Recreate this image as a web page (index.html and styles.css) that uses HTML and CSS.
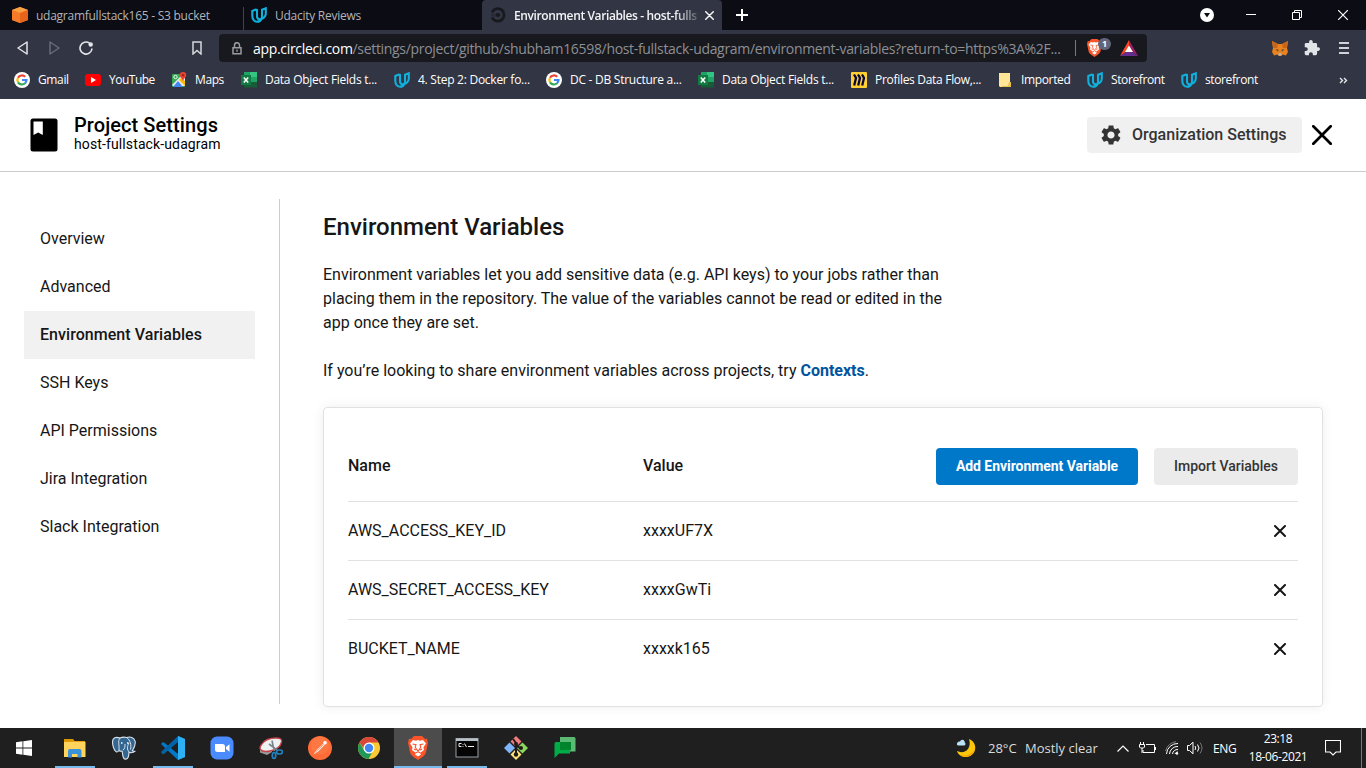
FILE: index.html
```html
<!DOCTYPE html>
<html lang="en">
<head>
<meta charset="utf-8">
<title>Environment Variables - host-fullstack-udagram</title>
<link rel="stylesheet" href="styles.css">
</head>
<body>
<svg class="defs" width="0" height="0">
  <symbol id="udacity" viewBox="0 0 16 16"><g fill="none" stroke="#11b0dc" stroke-width="2.1"><path d="M5.600 2.200 1.300 4v4.700c0 3.600 2.200 6.100 4.900 6.100 1.300 0 2.300-.5 3.100-1.300"/><path d="M6 2v7.600c0 1.800 1.200 2.600 2.700 2.600 3.500 0 6.100-2.400 6.100-5.700V1.300L11 2.800v6.700c0 2.600-1.600 4.800-4.500 5.100"/></g></symbol>
  <symbol id="google" viewBox="0 0 16 16"><circle cx="8" cy="8" r="8" fill="#fff"/><g fill="none" stroke-width="2.200"><path d="M11.200 4.800A4.600 4.600 0 0 0 4 5.700" stroke="#ea4335"/><path d="M4 5.700a4.600 4.600 0 0 0 0 4.600" stroke="#fbbc05"/><path d="M4 10.300a4.600 4.600 0 0 0 7 1" stroke="#34a853"/><path d="M11 11.300A4.400 4.400 0 0 0 12.500 8H8" stroke="#4285f4"/></g></symbol>
  <symbol id="excel" viewBox="0 0 16 16"><path d="M3 0h6v5H3z" fill="#21a366"/><path d="M9 0h7v5H9z" fill="#33c481"/><path d="M3 5h6v5H3z" fill="#107c41"/><path d="M9 5h7v5H9z" fill="#21a366"/><path d="M3 10h13v5.500H3z" fill="#185c37"/><path d="M0 3h10v10H0z" fill="#107c41"/><path d="m2.800 5.500 4.400 5M7.200 5.500l-4.400 5" stroke="#fff" stroke-width="1.600"/></symbol>
  <symbol id="cross" viewBox="0 0 12 12"><path d="m1 1 10 10M11 1 1 11" fill="none" stroke="currentColor" stroke-width="2" stroke-linecap="round"/></symbol>
  <symbol id="brave" viewBox="0 0 20 24"><path d="M6 0h8l3 3 2-.3 1 4-2 9.300c-.6 3-2.500 4.500-8 8-5.500-3.500-7.400-5-8-8L0 6.700l1-4L3 3z" fill="#fb542b"/><path d="m5 4 3 .7L10 4l2 .7L15 4l3 3.500-2.500 3.700.5 2.800-4 3 1 1.500-3 2-3-2L8 17l-4-3 .5-2.800L2 7.500z" fill="#fff"/><path d="m4.500 8 3.500.6-.8 2.400 1.600 2.700L10 15l1.200-1.300 1.600-2.700L12 8.600l3.500-.6M7.500 17l2.500-1.200L12.500 17M6 13l2 1M14 13l-2 1" fill="none" stroke="#fb542b" stroke-width="1.100"/></symbol>
</svg>

<div class="browser">
  <div class="tabs">
    <div class="tab">
      <svg class="fav" viewBox="0 0 16 16"><path d="M8 0 16 3v10l-8 3-8-3V3z" fill="#f58536"/><path d="m8 0 8 3-8 3-8-3z" fill="#f9a143"/><path d="M8 6 0 3v10l8 3z" fill="#f47b28"/><path d="m8 6 8-3v10l-8 3z" fill="#e8641b"/></svg>
      <span class="tab-title">udagramfullstack165 - S3 bucket</span>
    </div>
    <div class="tab tab-second">
      <svg class="fav"><use href="#udacity"/></svg>
      <span class="tab-title">Udacity Reviews</span>
    </div>
    <div class="tab active">
      <svg class="fav" viewBox="0 0 16 16"><path d="M1.500 5.200A7 7 0 1 1 1.500 10.800" fill="none" stroke="#17191d" stroke-width="3" transform="translate(.7 .7) scale(.9)"/><circle cx="8" cy="8" r="2.100" fill="#17191d"/><path d="M1 6.500h6v3H1z" fill="#17191d" opacity=".35"/></svg>
      <span class="tab-title">Environment Variables - host-fulls</span>
      <svg class="tab-close"><use href="#cross"/></svg>
    </div>
    <svg class="new-tab" viewBox="0 0 12 12"><path d="M6 0v12M0 6h12" stroke="#fff" stroke-width="2"/></svg>
    <div class="window-buttons">
      <svg width="14" height="14" viewBox="0 0 14 14"><circle cx="7" cy="7" r="7" fill="#fff"/><path d="M4 5h6L7 9.500z" fill="#0b0c14"/></svg>
      <svg width="10" height="10" viewBox="0 0 10 10"><path d="M0 4.500h10" stroke="#fff"/></svg>
      <svg width="10" height="10" viewBox="0 0 10 10"><path d="M.5 2.500h7v7h-7zM2.500 2.500v-2h7v7h-2" fill="none" stroke="#fff"/></svg>
      <svg width="10" height="10" viewBox="0 0 10 10"><path d="m0 0 10 10M10 0 0 10" stroke="#fff" stroke-width="1.200"/></svg>
    </div>
  </div>

  <div class="toolbar">
    <div class="nav">
      <svg width="11" height="14" viewBox="0 0 11 14"><path d="M10 1v12L1 7z" fill="none" stroke="#e4e5ea" stroke-width="1.500" stroke-linejoin="round"/></svg>
      <svg width="11" height="14" viewBox="0 0 11 14"><path d="M1 1v12l9-6z" fill="none" stroke="#686b78" stroke-width="1.500" stroke-linejoin="round"/></svg>
      <svg width="14" height="14" viewBox="0 0 14 14"><path d="M10.500 2.200A6 6 0 1 0 13 7.500" fill="none" stroke="#e4e5ea" stroke-width="1.600"/><circle cx="11.700" cy="3.500" r="2.200" fill="#e4e5ea"/></svg>
      <svg class="save" width="10" height="14" viewBox="0 0 10 14"><path d="M1 1h8v12l-4-3.500L1 13z" fill="none" stroke="#d6d7dc" stroke-width="1.500"/></svg>
    </div>
    <div class="address">
      <svg width="10" height="13" viewBox="0 0 10 13"><path d="M2.500 5.500V3.200a2.500 2.500 0 0 1 5 0v2.300" fill="none" stroke="#9a9ca4" stroke-width="1.500"/><path d="M1 5.700h8v6H1z" fill="none" stroke="#9a9ca4" stroke-width="1.500"/><path d="M4.300 7.500h1.400v2.300H4.300z" fill="#9a9ca4"/></svg>
      <span class="url"><b>app.circleci.com</b>/settings/project/github/shubham16598/host-fullstack-udagram/environment-variables?return-to=https%3A%2F...</span>
      <span class="url-split"></span>
      <span class="shield"><svg width="15" height="18"><use href="#brave"/></svg><i>1</i></span>
      <svg class="bat" width="18" height="16" viewBox="0 0 18 16"><path d="M9 0 0 16l9-6z" fill="#ff4724"/><path d="m9 0 9 16-9-6z" fill="#9e1f63"/><path d="m0 16 9-6 9 6z" fill="#662d91"/><path d="m9 5.500 4 6.500H5z" fill="#fff"/></svg>
    </div>
    <div class="extensions">
      <svg width="16" height="15" viewBox="0 0 16 15"><path d="m0 0 6 3h4l6-3-1 7 1 4-2 3.500-3.500-1L9 15H7l-1.500-1.500-3.500 1L0 11l1-4z" fill="#e8821e"/><path d="m0 0 6 3-1 4-4 0zM16 0l-6 3 1 4 4 0z" fill="#c9651b"/><path d="m3.500 8 3 1-.5 1.500zM12.500 8l-3 1 .5 1.500z" fill="#333a4a"/><path d="M6.500 12h3l.3 2.500H6.200z" fill="#c0ad9e"/></svg>
      <svg width="16" height="16" viewBox="1 1 22 22"><path d="M20.500 11H19V7a2 2 0 0 0-2-2h-4V3.500a2.500 2.500 0 0 0-5 0V5H4a2 2 0 0 0-2 2v3.800h1.500a2.700 2.700 0 0 1 0 5.400H2V20c0 1.100.9 2 2 2h3.800v-1.500a2.700 2.700 0 0 1 5.400 0V22H17a2 2 0 0 0 2-2v-4h1.500a2.500 2.500 0 0 0 0-5z" fill="#e3e4e8"/></svg>
      <svg width="10" height="12" viewBox="0 0 10 12"><path d="M0 1h10M0 6h10M0 11h10" stroke="#d2d3d9" stroke-width="1.800"/></svg>
    </div>
  </div>

  <div class="bookmarks">
    <div class="bm bm1"><svg><use href="#google"/></svg><span>Gmail</span></div>
    <div class="bm bm2"><svg viewBox="0 0 16 16"><rect y="2" width="16" height="12" rx="3" fill="#f00"/><path d="M6 5v6l5-3z" fill="#fff"/></svg><span>YouTube</span></div>
    <div class="bm bm3"><svg viewBox="0 0 16 16"><rect x="1" y="2" width="13" height="13" rx="1" fill="#34a853"/><path d="m1 13 8-8 5 1v8H2z" fill="#e8eaed"/><path d="m2 15 5-6 5 6z" fill="#4285f4"/><path d="m8 8 6 6V9l-4-3z" fill="#fbbc04"/><circle cx="4.500" cy="5" r="1.700" fill="none" stroke="#fff" stroke-width=".9"/><path d="M12 0a3.300 3.300 0 0 1 3.300 3.300C15.300 5.500 12 6.500 12 10c0-3.500-3.300-4.500-3.300-6.700A3.300 3.300 0 0 1 12 0z" fill="#ea4335"/><circle cx="12" cy="3.200" r="1.200" fill="#9d241b"/></svg><span>Maps</span></div>
    <div class="bm bm4"><svg><use href="#excel"/></svg><span>Data Object Fields t...</span></div>
    <div class="bm bm5"><svg><use href="#udacity"/></svg><span>4. Step 2: Docker fo...</span></div>
    <div class="bm bm6"><svg><use href="#google"/></svg><span>DC - DB Structure a...</span></div>
    <div class="bm bm7"><svg><use href="#excel"/></svg><span>Data Object Fields t...</span></div>
    <div class="bm bm8"><svg viewBox="0 0 16 16"><rect width="16" height="16" rx="1" fill="#ffd02f"/><path d="m3 2.500 2 3.500-1.800 7.500M7 2.500l2 3.500-1.800 7.500M11 2.500l2 3.500-1.800 7.500" fill="none" stroke="#07063f" stroke-width="2.300"/></svg><span>Profiles Data Flow,...</span></div>
    <div class="bm bm9"><svg viewBox="0 0 16 16"><path d="M2 1h11v10h1v4H3l-1-1z" fill="#ffe595"/><path d="M12 10h2v5H5v-1h6z" fill="#e9bf4e"/></svg><span>Imported</span></div>
    <div class="bm bm10"><svg><use href="#udacity"/></svg><span>Storefront</span></div>
    <div class="bm bm11"><svg><use href="#udacity"/></svg><span>storefront</span></div>
    <svg class="more" viewBox="0 0 9 6"><path d="m1 .5 2.500 2.500L1 5.500M5 .5 7.500 3 5 5.500" fill="none" stroke="#e6e7eb" stroke-width="1.400"/></svg>
  </div>
</div>

<header class="header">
  <svg class="book" viewBox="0 0 28 34"><rect x=".5" y=".5" width="27" height="33" rx="2.500"/><path d="M3.500 3.500h9.300V17l-4.600-2.500L3.500 17z" fill="#fff"/></svg>
  <div class="project">
    <div class="project-title">Project Settings</div>
    <div class="project-name">host-fullstack-udagram</div>
  </div>
  <button class="org"><svg width="24" height="24" viewBox="0 0 24 24"><path fill="#343434" d="M19.140 12.940c.04-.3.060-.61.060-.94 0-.32-.02-.64-.07-.94l2.030-1.580c.18-.14.23-.41.120-.61l-1.920-3.320c-.12-.22-.37-.29-.59-.22l-2.390.96c-.5-.38-1.030-.7-1.620-.94l-.36-2.540c-.04-.24-.24-.41-.48-.41h-3.840c-.24 0-.43.17-.47.41l-.36 2.540c-.59.24-1.130.57-1.620.94l-2.390-.96c-.22-.08-.47 0-.59.220L2.740 8.870c-.12.21-.08.470.12.610l2.030 1.580c-.05.3-.09.630-.09.940s.02.640.07.940l-2.030 1.580c-.18.140-.23.410-.12.610l1.920 3.320c.12.220.37.290.59.220l2.390-.96c.5.380 1.030.7 1.620.94l.36 2.540c.05.24.24.410.48.410h3.840c.24 0 .44-.17.47-.41l.36-2.540c.59-.24 1.130-.56 1.620-.94l2.390.96c.22.080.47 0 .59-.22l1.920-3.320c.12-.22.070-.47-.12-.61l-2.010-1.580zM12 15.600c-1.980 0-3.600-1.620-3.600-3.600s1.620-3.600 3.600-3.600 3.600 1.620 3.600 3.600-1.620 3.600-3.600 3.600z"/></svg><span>Organization Settings</span></button>
  <svg class="close" viewBox="0 0 20 20"><path d="m1.300 1.300 17.400 17.400M18.700 1.300 1.300 18.700" stroke="#000" stroke-width="2.700" stroke-linecap="round"/></svg>
</header>

<div class="body">
  <nav class="sidebar">
    <a>Overview</a>
    <a>Advanced</a>
    <a class="current">Environment Variables</a>
    <a>SSH Keys</a>
    <a>API Permissions</a>
    <a>Jira Integration</a>
    <a>Slack Integration</a>
  </nav>
  <main class="main">
    <h1>Environment Variables</h1>
    <p>Environment variables let you add sensitive data (e.g. API keys) to your jobs rather than<br>placing them in the repository. The value of the variables cannot be read or edited in the<br>app once they are set.</p>
    <p>If you’re looking to share environment variables across projects, try <a class="link">Contexts</a>.</p>
    <section class="card">
      <div class="row head"><span>Name</span><span>Value</span><div class="actions"><button class="btn primary">Add Environment Variable</button><button class="btn">Import Variables</button></div></div>
      <div class="row"><span>AWS_ACCESS_KEY_ID</span><span>xxxxUF7X</span><svg class="remove"><use href="#cross"/></svg></div>
      <div class="row"><span>AWS_SECRET_ACCESS_KEY</span><span>xxxxGwTi</span><svg class="remove"><use href="#cross"/></svg></div>
      <div class="row"><span>BUCKET_NAME</span><span>xxxxk165</span><svg class="remove"><use href="#cross"/></svg></div>
    </section>
  </main>
</div>

<footer class="taskbar">
  <div class="start"><svg width="16" height="16" viewBox="0 0 16 16"><path d="m0 2.200 6.500-.9v6.200H0zM7.300 1.200 16 0v7.500H7.300zM0 8.400h6.500v6.300L0 13.800zM7.300 8.400H16V16l-8.700-1.200z" fill="#fff"/></svg></div>
  <div class="apps">
    <div class="app open"><svg viewBox="0 0 24 24"><path d="M1 3h9l1.500 2H22v16H1z" fill="#e8a30c"/><path d="M1 6h21.500v15H1z" fill="#ffd35c"/><path d="M1 3h9v2.500H1z" fill="#dd9500"/><path d="M5 21.500V15q0-2 2-2h9.500q2 0 2 2v6.500h-4V18h-5.500v3.500z" fill="#3a92d8"/></svg></div>
    <div class="app"><svg viewBox="0 0 24 24"><path d="M8 2C4 .5.500 1.500.5 6c0 4 2 9.500 4 10 1 .3 2-.8 2.600-1.500.8.7 2 .9 3 .6.600 2.500.2 7.500 3 8 3 .3 3.600-2.500 3.900-6.700 2 .5 4.500.3 5.800-1-1-.2-1.800-.3-2.500-.6 2-3 3.400-7.600 2.700-10C22 1.500 18.500.200 14.500 1.500 12 .8 10 1 8 2z" fill="#336791" stroke="#d9e2ea" stroke-width="1.100"/><path d="M8 2C5.500 5 7.500 9 7 14M14.500 1.500c4 2.500 5 8 4 12M11 14c2-1 2-4 2-6M17 16c-2-2-2-6 0-9" fill="none" stroke="#d9e2ea" stroke-width="1"/><path d="M9 7h1.500M15 7h1.500" stroke="#fff" stroke-width="1.400"/></svg></div>
    <div class="app open"><svg viewBox="0 0 24 24"><path d="M17 0 24 3v18l-7 3L1.500 9.500 0 8l2-2 2 1.200L17 18z" fill="#0078c8"/><path d="m0 16 17-16v6L4 17l-2 1.500z" fill="#0065a9"/><path d="M17 0 24 3v18l-7 3z" fill="#2eb0f5"/></svg></div>
    <div class="app"><svg viewBox="0 0 24 24"><rect x=".5" y=".5" width="23" height="23" rx="6.500" fill="#4a8cff"/><path d="M5 8h7.500Q15 8 15 10.500V16H7.500Q5 16 5 13.500zM16 11l3.500-2.700v7.400L16 13z" fill="#fff"/></svg></div>
    <div class="app"><svg viewBox="0 0 24 24"><path d="m1 14 0 2.500 7 2.500 5-3v-3z" fill="#9a9a9a"/><path d="M3 8q4-6 14-6 6.500 0 5.500 4-1.500 7-11.500 9-7 1.500-9.500-1.500Q0 11.500 3 8z" fill="#eef1f2" stroke="#c4434a" stroke-width="1.300"/><path d="M13 4.500q1 6 2.500 10.500M10 8l8 6" fill="none" stroke="#79858c" stroke-width="1.600"/><g fill="none" stroke="#2182bd" stroke-width="1.700"><ellipse cx="15" cy="19.500" rx="1.700" ry="3"/><ellipse cx="20.500" cy="16" rx="3" ry="2"/></g></svg></div>
    <div class="app"><svg viewBox="0 0 24 24"><circle cx="12" cy="12" r="12" fill="#ff6c37"/><circle cx="12" cy="9.500" r="9" fill="#ff8450" opacity=".45"/><path d="m5.500 18.500 3-4.500 7-6.500 1.300 1.300-6.500 6.500z" fill="#fff"/><circle cx="17" cy="6.800" r="1.800" fill="#fff"/><path d="m7.500 16 8-7.500" stroke="#ff6c37" stroke-width=".8"/></svg></div>
    <div class="app"><svg viewBox="0 0 24 24"><circle cx="12" cy="12" r="11" fill="#fbc934"/><path d="M2.500 6.500A11 11 0 0 1 21.500 6.500H12L8 14z" fill="#d9473a"/><path d="M2.500 6.500A11 11 0 0 0 11.500 23l4.700-8.500L12 17l-5-3z" fill="#20985a"/><circle cx="12" cy="12" r="5.500" fill="#fff"/><circle cx="12" cy="12" r="4.200" fill="#4285f4"/></svg></div>
    <div class="app open selected"><svg><use href="#brave"/></svg></div>
    <div class="app open"><svg viewBox="0 0 24 24"><rect x="1" y="2.500" width="22" height="18.500" fill="#050505" stroke="#9aa0a6"/><path d="M1 2.500h22v2.500H1z" fill="#b8c1ca"/><path d="M6.500 7.500H4v3h2.500M8 8v.8M8 10v.8M9.500 7.500l2 3.500M13 10.500h6" fill="none" stroke="#eee" stroke-width="1"/></svg></div>
    <div class="app"><svg viewBox="0 0 24 24"><path d="m12 0 5.500 5.500L12 11 6.500 5.500z" fill="#f27c7c"/><path d="m5.500 6.500L11 12l-5.500 5.500L0 12z" fill="#80b4fb"/><path d="m18.500 6.500L24 12l-5.500 5.500L13 12z" fill="#8cd95d"/><path d="m12 13 5.500 5.500L12 24l-5.500-5.500z" fill="#ffe27a"/><path d="m9 3 3 4v12M12 9l5 4" fill="none" stroke="#201b1b" stroke-width="2"/><circle cx="12" cy="8" r="2" fill="#201b1b"/><circle cx="12" cy="18.500" r="2.200" fill="#201b1b"/><circle cx="17" cy="12" r="2" fill="#201b1b"/></svg></div>
    <div class="app"><svg viewBox="0 0 24 24"><path d="M7 1h14q1.500 0 1.500 1.500v13H7z" fill="#5bb974"/><path d="M3 6h14v11.500H6L1.500 22V7.500Q1.500 6 3 6z" fill="#00ac47"/><path d="M7 6h11v8H7z" fill="#00832d"/></svg></div>
  </div>
  <div class="weather">
    <svg width="20" height="20" viewBox="0 0 20 20"><path d="M13 1c8 3 8 13 2 16.500C10 20.500 3 19 1 13c8 4 15-3 12-12z" fill="#fbc60b"/><path d="M19 11c-1 6-9 10-15 6 6 2 12-1 15-6z" fill="#f6a000"/><path d="M2 7.500q-2-1-.5-3 1-1.500 2.500-1Q5 1 7.500 2 9 3 8.700 4.500 10.500 6 8.500 7.500z" fill="#b9e1f8"/></svg>
    <span class="temp">28°C</span><span class="cond">Mostly clear</span>
  </div>
  <div class="tray">
    <svg width="12" height="7" viewBox="0 0 12 7"><path d="m.5 6.500 5.500-5.500 5.500 5.500" fill="none" stroke="#fff" stroke-width="1.200"/></svg>
    <svg class="battery" width="17" height="12" viewBox="0 0 17 12"><path d="M7 2.500h8.500v8H4V8M16.500 5v3M1.500 0v2M4.500 0v2M.5 2.500h5v2.500l-1 1h-3l-1-1zM3 6v5" fill="none" stroke="#fff"/></svg>
    <svg class="wifi" width="14" height="14" viewBox="0 0 14 14"><g fill="none" stroke="#fff"><path d="M1.500 13A11 11 0 0 1 13 2.500M4.500 13A8 8 0 0 1 13 5.500M7.500 13A5 5 0 0 1 13 8.500M10 13a3 3 0 0 1 3-2"/><path d="M.5 10A12 12 0 0 1 11 .7" stroke="#777"/></g><circle cx="12" cy="12.500" r="1.200" fill="#fff"/></svg>
    <svg class="sound" width="17" height="14" viewBox="0 0 17 14"><g fill="none" stroke="#fff"><path d="M.5 4.500h2L6 1.200v11.600L2.500 9.500h-2zM8 5q1.500 2 0 4M10.500 3.500q3 3.500 0 7"/><path d="M13 1.500q4 5.500 0 11" stroke="#777"/></g></svg>
    <span class="lang">ENG</span>
    <div class="clock"><span>23:18</span><span class="date">18-06-2021</span></div>
    <svg class="notice" width="16" height="16" viewBox="0 0 16 16"><path d="M.5.500h15v11.500H11L8 15l-3-3H.5z" fill="none" stroke="#fff" stroke-width="1.100"/></svg>
  </div>
</footer>
</body>
</html>
```
FILE: styles.css
```css
* { box-sizing: border-box; }
body {
  margin: 0;
  width: 1366px;
  height: 768px;
  overflow: hidden;
  display: flex;
  flex-direction: column;
  background: #fff;
  color: #161616;
  font-family: Roboto, "Liberation Sans", sans-serif;
  font-size: 16px;
}
svg { display: block; flex: none; }
.defs { display: none; }
button { border: 0; font-family: inherit; white-space: nowrap; }

/* Browser chrome */
.browser {
  height: 99px;
  flex: none;
  background: #323543;
  font-family: "Open Sans", "Noto Sans", sans-serif;
  font-size: 12px;
  letter-spacing: -.26px;
  white-space: nowrap;
}
.tabs { display: flex; height: 30px; background: #0b0c14; }
.tab { display: flex; align-items: center; width: 243px; padding-left: 12px; color: #b3b4b8; }
.tab-second { width: 239px; padding-left: 8px; background: linear-gradient(#41434c, #41434c) 0 7px / 1px 23px no-repeat; }
.tab.active { width: 240px; background: #323543; border-radius: 4px 4px 0 0; color: #f4f4f6; padding: 0 7px 0 8px; }
.fav { width: 16px; height: 16px; margin-right: 8px; }
.tab.active .tab-title { width: 184px; font-weight: 600; letter-spacing: -.38px; mask-image: linear-gradient(90deg, #000 160px, rgba(0, 0, 0, .2) 184px); }
.tab-close { width: 9px; height: 9px; margin-left: 7px; }
.new-tab { width: 12px; height: 12px; margin: 9px 0 0 14px; }
.window-buttons { display: flex; align-items: center; margin-left: auto; padding-right: 18px; }
.window-buttons svg:nth-child(2) { margin-left: 32px; }
.window-buttons svg:nth-child(3) { margin-left: 36px; }
.window-buttons svg:nth-child(4) { margin-left: 36px; }

.toolbar { display: flex; height: 36px; align-items: center; }
.nav { display: flex; align-items: center; width: 219px; padding-left: 17px; }
.nav svg:nth-child(2) { margin-left: 21px; }
.nav svg:nth-child(3) { margin-left: 19px; }
.nav .save { margin-left: 99px; }
.address { display: flex; align-items: center; width: 928px; height: 28px; padding-left: 13px; border-radius: 4px; background: #17191f; }
.url { flex: none; width: 813px; margin-left: 11px; color: #8d8f95; font-size: 14px; letter-spacing: -.32px; }
.url b { font-weight: 400; color: #fff; }
.url-split { width: 1px; height: 16px; margin: 0 11px 0 9px; background: #777981; }
.shield { display: flex; position: relative; width: 24px; }
.shield i { position: absolute; left: 11px; top: -1px; width: 13px; height: 12px; border-radius: 6px; background: #62657a; color: #fff; font: 700 9px/12px "Open Sans", sans-serif; text-align: center; }
.bat { margin-left: 9px; }
.extensions { display: flex; align-items: center; margin-left: 125px; }
.extensions svg:nth-child(2) { margin-left: 16px; }
.extensions svg:nth-child(3) { margin-left: 19px; }

.bookmarks { display: flex; align-items: center; height: 28px; padding-left: 14px; color: #fff; }
.bm { display: flex; align-items: center; gap: 8px; }
.bm svg { width: 16px; height: 16px; }
.bm span { padding-bottom: 1px; }
.bm1 { width: 71px; letter-spacing: -.36px; }
.bm2 { width: 86px; letter-spacing: -.5px; }
.bm3 { width: 70px; letter-spacing: -.4px; }
.bm4 { width: 153px; }
.bm5, .bm6 { width: 152px; }
.bm7 { width: 153px; }
.bm8 { width: 146px; letter-spacing: -.3px; }
.bm9 { width: 90px; letter-spacing: -.35px; }
.bm10, .bm11 { width: 94px; letter-spacing: -.38px; }
.more { width: 9px; height: 7px; margin-left: 64px; }

/* Page header */
.header { display: flex; align-items: center; flex: none; height: 73px; padding: 0 34px 0 30px; border-bottom: 1px solid #ccc; color: #000; }
.book { width: 28px; height: 34px; }
.project { margin-left: 16px; padding-bottom: 4px; }
.project-title { font-size: 20px; line-height: 22px; font-weight: 500; letter-spacing: .08px; }
.project-name { font-size: 14px; line-height: 16px; letter-spacing: .12px; }
.org { display: flex; align-items: center; gap: 9px; width: 215px; height: 36px; margin-left: auto; padding: 0 0 0 12px; border-radius: 4px; background: #f0f0f0; color: #343434; font-size: 16px; font-weight: 500; }
.org span { padding-bottom: 2px; }
.close { width: 20px; height: 20px; margin-left: 10px; }

/* Content */
.body { display: flex; flex: 1; min-height: 0; padding-top: 27px; }
.sidebar { width: 280px; height: 505px; padding: 16px 24px 0; border-right: 1px solid #ccc; }
.sidebar a { display: block; width: 231px; height: 48px; padding-left: 16px; line-height: 47px; }
.sidebar .current { background: #f1f1f1; font-weight: 500; letter-spacing: .05px; }
.main { width: 1043px; padding: 12px 0 0 43px; }
h1 { margin: 0 0 20px; font-size: 24px; line-height: 32px; font-weight: 500; }
p { margin: 0 0 24px; line-height: 24px; }
.link { color: #0055a0; font-weight: 700; }
.card { width: 1000px; height: 300px; padding: 40px 24px 0; border: 1px solid #e1e1e1; border-radius: 4px; box-shadow: 0 0 12px rgba(0, 0, 0, .07); }
.row { display: flex; align-items: center; height: 59px; border-bottom: 1px solid #e1e1e1; }
.row > span { flex: none; width: 295px; padding-bottom: 2px; }
.row > span + span { width: 240px; }
.row:last-child { border-bottom: 0; height: 58px; }
.head { height: 54px; align-items: flex-start; font-weight: 500; line-height: 35px; }
.actions { display: flex; gap: 16px; margin-left: auto; }
.btn { width: 144px; height: 37px; padding: 0 0 1px; border-radius: 4px; background: #ebebeb; color: #343434; font-size: 14px; font-weight: 500; }
.btn.primary { width: 202px; background: #0078ca; color: #fff; font-weight: 700; letter-spacing: -.05px; }
.remove { width: 12px; height: 12px; margin: 0 12px 0 auto; color: #161616; }

/* Taskbar */
.taskbar { display: flex; flex: none; height: 40px; background: #1f1f1f; color: #fff; font-family: "Open Sans", "Noto Sans", sans-serif; font-size: 12px; white-space: nowrap; }
.start { display: flex; align-items: center; justify-content: center; width: 48px; }
.apps { display: flex; gap: 1px; margin-left: 3px; }
.app { display: flex; align-items: center; justify-content: center; width: 48px; }
.app svg { width: 24px; height: 24px; }
.app.open { background: linear-gradient(#76b9ed, #76b9ed) center bottom / 40px 2px no-repeat; }
.app.selected { background: linear-gradient(#76b9ed, #76b9ed) center bottom / 48px 2px no-repeat #4c4c4c; }
.weather { display: flex; align-items: center; margin-left: 367px; width: 161px; color: #dcdcdc; font-size: 13px; }
.temp { width: 37px; margin-left: 12px; }
.tray { display: flex; align-items: center; flex: 1; padding-right: 4px; margin-right: 4px; border-right: 1px solid #777; }
.battery { margin-left: 10px; }
.wifi { margin-left: 9px; }
.sound { margin-left: 8px; }
.lang { width: 25px; margin-left: 9px; letter-spacing: -.3px; }
.clock { display: flex; flex-direction: column; align-items: center; width: 60px; margin-left: 10px; line-height: 18px; letter-spacing: -.4px; }
.notice { margin-left: 17px; }
```
